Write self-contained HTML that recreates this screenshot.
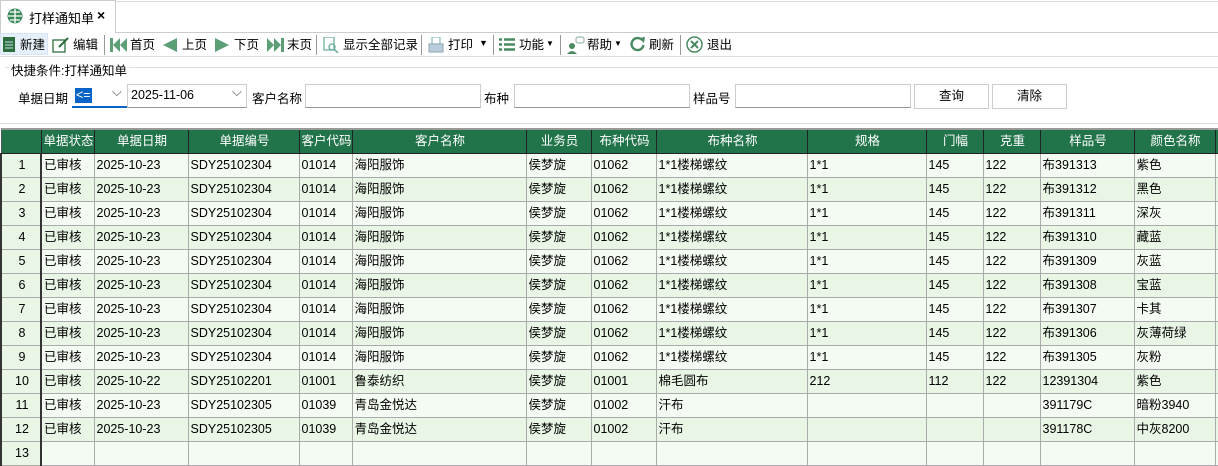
<!DOCTYPE html>
<html><head><meta charset="utf-8"><style>
*{margin:0;padding:0;box-sizing:border-box}
body{width:1218px;height:447px;overflow:hidden;background:#fff;font-family:"Liberation Sans","Noto Sans CJK SC",sans-serif;font-size:12px;color:#000;position:relative}
.a{position:absolute;white-space:nowrap}
.tab{left:0;top:0;width:116px;height:33px;border:1px solid #ccc;border-bottom:none;background:#fff}
.tabline{left:116px;top:32px;width:1102px;height:1px;background:#ccc}
.tl{left:0;top:1px;width:1218px;height:1px;background:#ddd}
.sep{width:1px;height:20px;background:#999;top:35px}
.tb{top:36px;line-height:18px;font-size:12.5px}
input.box{position:absolute;border:1px solid #ccc;border-bottom-color:#999;height:24px;background:#fff}
.btn{position:absolute;border:1px solid #ccc;height:25px;background:#fff;text-align:center;line-height:23px;font-size:12.5px}
table{position:absolute;left:0;top:128px;width:1234px;border-collapse:collapse;table-layout:fixed;border-top:2px solid #999}
td,th{height:24px;line-height:22px;vertical-align:middle;border:1px solid #aaa;padding:0 0 0 2px;overflow:hidden;white-space:nowrap;font-size:12.5px;font-weight:normal;text-align:left}
th{background:#21734a;color:#fff;text-align:center;border-color:#222 #222 #222 #555;border-width:0 1px 1px 1px}
td.n{text-align:center;background:#e9f6e6;border-left:2px solid #333;border-right:2px solid #333}
tr.o td{background:#f4fbf2}tr.e td{background:#e9f6e6}
tr td.n{background:#e9f6e6}
</style></head><body>
<div class="a tl"></div>
<div class="a tab"></div>
<div class="a tabline"></div>
<svg class="a" style="left:7px;top:8px" width="16" height="16" viewBox="0 0 16 16"><circle cx="8" cy="8" r="7.5" fill="#3a8a5a"/><path d="M8 1v14M1 8h14M3 4h10M3 12h10" stroke="#fff" stroke-width="1.3" fill="none"/></svg>
<div class="a" style="left:29px;top:8px;font-size:13px">打样通知单</div>
<div class="a" style="left:97px;top:7px;font-size:14px;font-weight:bold">×</div>

<div class="a" style="left:0;top:33px;width:48px;height:22px;background:#e6f0fa;border:1px solid #d5e5f5"></div>
<svg class="a" style="left:3px;top:37px" width="12" height="15"><rect width="12" height="15" fill="#2c6e3e"/><path d="M2 5h8M2 8h8M2 11h8" stroke="#cde" stroke-width="1"/></svg>
<div class="a tb" style="left:20px">新建</div>
<svg class="a" style="left:52px;top:36px" width="18" height="17"><rect x="1" y="4" width="12" height="12" fill="none" stroke="#2c6e3e" stroke-width="1.3"/><path d="M7 11l9-9" stroke="#2c6e3e" stroke-width="2"/></svg>
<div class="a tb" style="left:73px">编辑</div>
<div class="a sep" style="left:104px"></div>
<svg class="a" style="left:110px;top:38px" width="17" height="14"><rect x="0" y="0" width="3" height="14" fill="#5c9e76"/><path d="M10 0v14L3 7zM17 0v14L10 7z" fill="#5c9e76"/></svg>
<div class="a tb" style="left:130px">首页</div>
<svg class="a" style="left:163px;top:38px" width="14" height="14"><path d="M14 0v14L0 7z" fill="#5c9e76"/></svg>
<div class="a tb" style="left:182px">上页</div>
<svg class="a" style="left:215px;top:38px" width="14" height="14"><path d="M0 0v14L14 7z" fill="#5c9e76"/></svg>
<div class="a tb" style="left:234px">下页</div>
<svg class="a" style="left:267px;top:38px" width="17" height="14"><path d="M0 0v14L7 7zM7 0v14L14 7z" fill="#5c9e76"/><rect x="14" width="3" height="14" fill="#5c9e76"/></svg>
<div class="a tb" style="left:287px">末页</div>
<div class="a sep" style="left:316px"></div>
<svg class="a" style="left:323px;top:37px" width="16" height="16"><rect x="1" y="0" width="10" height="13" fill="none" stroke="#6a9" stroke-width="1.2"/><circle cx="9" cy="10" r="3" fill="none" stroke="#6a9" stroke-width="1.3"/><path d="M11 12l4 4" stroke="#6a9" stroke-width="1.5"/></svg>
<div class="a tb" style="left:343px">显示全部记录</div>
<div class="a sep" style="left:421px"></div>
<svg class="a" style="left:428px;top:37px" width="16" height="16"><rect x="4" y="0" width="8" height="7" fill="none" stroke="#8bb" stroke-width="1.2"/><rect x="1" y="7" width="14" height="8" fill="#bcd" stroke="#8aa"/></svg>
<div class="a tb" style="left:448px">打印</div>
<div class="a" style="left:479px;top:38px;font-size:9px">▼</div>
<div class="a sep" style="left:493px"></div>
<svg class="a" style="left:499px;top:38px" width="16" height="13"><path d="M0 1.5h3M0 6.5h3M0 11.5h3M5 1.5h11M5 6.5h11M5 11.5h11" stroke="#4a8a62" stroke-width="2.4"/></svg>
<div class="a tb" style="left:519px">功能</div>
<div class="a" style="left:546px;top:39px;font-size:8px">▼</div>
<div class="a sep" style="left:560px"></div>
<svg class="a" style="left:567px;top:36px" width="18" height="18"><circle cx="5" cy="10" r="3" fill="#4a8a62"/><path d="M0 18q5-6 10 0z" fill="#4a8a62"/><rect x="9" y="1" width="8" height="6" rx="2" fill="none" stroke="#8a9" /></svg>
<div class="a tb" style="left:587px">帮助</div>
<div class="a" style="left:614px;top:39px;font-size:8px">▼</div>
<svg class="a" style="left:629px;top:36px" width="17" height="17"><path d="M13 4A6 6 0 1 0 14.5 9" fill="none" stroke="#4a8a62" stroke-width="2.4"/><path d="M10 2l6-1-1 6z" fill="#4a8a62"/></svg>
<div class="a tb" style="left:649px">刷新</div>
<div class="a sep" style="left:680px"></div>
<svg class="a" style="left:686px;top:36px" width="17" height="17"><circle cx="8.5" cy="8.5" r="7.5" fill="none" stroke="#4a8a62" stroke-width="1.5"/><path d="M5 5l7 7M12 5l-7 7" stroke="#4a8a62" stroke-width="2"/></svg>
<div class="a tb" style="left:707px">退出</div>
<div class="a" style="left:0;top:56px;width:1218px;height:1px;background:#ddd"></div>

<div class="a" style="left:5px;top:67px;width:1213px;height:1px;background:#ddd"></div>
<div class="a" style="left:9px;top:60px;background:#fff;padding:0 2px;font-size:12.5px">快捷条件:打样通知单</div>
<div class="a" style="left:18px;top:88px;font-size:12.5px">单据日期</div>
<div class="a" style="left:72px;top:84px;width:55px;height:24px;border-bottom:2px solid #0a64c8"></div>
<div class="a" style="left:75px;top:88px;background:#0a64c8;color:#fff;padding:0 1px;font-size:12.5px;line-height:15px">&lt;=</div>
<div class="a" style="left:112px;top:84px;font-size:13px;color:#444">⌵</div>
<input class="box" style="left:127px;top:84px;width:120px">
<div class="a" style="left:131px;top:88px;font-size:12.5px">2025-11-06</div>
<div class="a" style="left:232px;top:84px;font-size:13px;color:#444">⌵</div>
<div class="a" style="left:252px;top:88px;font-size:12.5px">客户名称</div>
<input class="box" style="left:305px;top:84px;width:176px">
<div class="a" style="left:484px;top:88px;font-size:12.5px">布种</div>
<input class="box" style="left:514px;top:84px;width:176px">
<div class="a" style="left:693px;top:88px;font-size:12.5px">样品号</div>
<input class="box" style="left:735px;top:84px;width:176px">
<div class="btn" style="left:914px;top:84px;width:75px">查询</div>
<div class="btn" style="left:992px;top:84px;width:75px">清除</div>
<div class="a" style="left:0;top:123px;width:1218px;height:1px;background:#ddd"></div>

<table>
<colgroup><col style="width:40px"><col style="width:53px"><col style="width:94px"><col style="width:111px"><col style="width:53px"><col style="width:174px"><col style="width:65px"><col style="width:65px"><col style="width:151px"><col style="width:119px"><col style="width:57px"><col style="width:57px"><col style="width:94px"><col style="width:81px"><col style="width:20px"></colgroup>
<tr><th></th><th>单据状态</th><th>单据日期</th><th>单据编号</th><th>客户代码</th><th>客户名称</th><th>业务员</th><th>布种代码</th><th>布种名称</th><th>规格</th><th>门幅</th><th>克重</th><th>样品号</th><th>颜色名称</th><th></th></tr>
<tr class="o"><td class="n">1</td><td>已审核</td><td>2025-10-23</td><td>SDY25102304</td><td>01014</td><td>海阳服饰</td><td>侯梦旋</td><td>01062</td><td>1*1楼梯螺纹</td><td>1*1</td><td>145</td><td>122</td><td>布391313</td><td>紫色</td><td></td></tr>
<tr class="e"><td class="n">2</td><td>已审核</td><td>2025-10-23</td><td>SDY25102304</td><td>01014</td><td>海阳服饰</td><td>侯梦旋</td><td>01062</td><td>1*1楼梯螺纹</td><td>1*1</td><td>145</td><td>122</td><td>布391312</td><td>黑色</td><td></td></tr>
<tr class="o"><td class="n">3</td><td>已审核</td><td>2025-10-23</td><td>SDY25102304</td><td>01014</td><td>海阳服饰</td><td>侯梦旋</td><td>01062</td><td>1*1楼梯螺纹</td><td>1*1</td><td>145</td><td>122</td><td>布391311</td><td>深灰</td><td></td></tr>
<tr class="e"><td class="n">4</td><td>已审核</td><td>2025-10-23</td><td>SDY25102304</td><td>01014</td><td>海阳服饰</td><td>侯梦旋</td><td>01062</td><td>1*1楼梯螺纹</td><td>1*1</td><td>145</td><td>122</td><td>布391310</td><td>藏蓝</td><td></td></tr>
<tr class="o"><td class="n">5</td><td>已审核</td><td>2025-10-23</td><td>SDY25102304</td><td>01014</td><td>海阳服饰</td><td>侯梦旋</td><td>01062</td><td>1*1楼梯螺纹</td><td>1*1</td><td>145</td><td>122</td><td>布391309</td><td>灰蓝</td><td></td></tr>
<tr class="e"><td class="n">6</td><td>已审核</td><td>2025-10-23</td><td>SDY25102304</td><td>01014</td><td>海阳服饰</td><td>侯梦旋</td><td>01062</td><td>1*1楼梯螺纹</td><td>1*1</td><td>145</td><td>122</td><td>布391308</td><td>宝蓝</td><td></td></tr>
<tr class="o"><td class="n">7</td><td>已审核</td><td>2025-10-23</td><td>SDY25102304</td><td>01014</td><td>海阳服饰</td><td>侯梦旋</td><td>01062</td><td>1*1楼梯螺纹</td><td>1*1</td><td>145</td><td>122</td><td>布391307</td><td>卡其</td><td></td></tr>
<tr class="e"><td class="n">8</td><td>已审核</td><td>2025-10-23</td><td>SDY25102304</td><td>01014</td><td>海阳服饰</td><td>侯梦旋</td><td>01062</td><td>1*1楼梯螺纹</td><td>1*1</td><td>145</td><td>122</td><td>布391306</td><td>灰薄荷绿</td><td></td></tr>
<tr class="o"><td class="n">9</td><td>已审核</td><td>2025-10-23</td><td>SDY25102304</td><td>01014</td><td>海阳服饰</td><td>侯梦旋</td><td>01062</td><td>1*1楼梯螺纹</td><td>1*1</td><td>145</td><td>122</td><td>布391305</td><td>灰粉</td><td></td></tr>
<tr class="e"><td class="n">10</td><td>已审核</td><td>2025-10-22</td><td>SDY25102201</td><td>01001</td><td>鲁泰纺织</td><td>侯梦旋</td><td>01001</td><td>棉毛圆布</td><td>212</td><td>112</td><td>122</td><td>12391304</td><td>紫色</td><td></td></tr>
<tr class="o"><td class="n">11</td><td>已审核</td><td>2025-10-23</td><td>SDY25102305</td><td>01039</td><td>青岛金悦达</td><td>侯梦旋</td><td>01002</td><td>汗布</td><td></td><td></td><td></td><td>391179C</td><td>暗粉3940</td><td></td></tr>
<tr class="e"><td class="n">12</td><td>已审核</td><td>2025-10-23</td><td>SDY25102305</td><td>01039</td><td>青岛金悦达</td><td>侯梦旋</td><td>01002</td><td>汗布</td><td></td><td></td><td></td><td>391178C</td><td>中灰8200</td><td></td></tr>
<tr class="o"><td class="n">13</td><td></td><td></td><td></td><td></td><td></td><td></td><td></td><td></td><td></td><td></td><td></td><td></td><td></td><td></td></tr>
</table>
</body></html>
